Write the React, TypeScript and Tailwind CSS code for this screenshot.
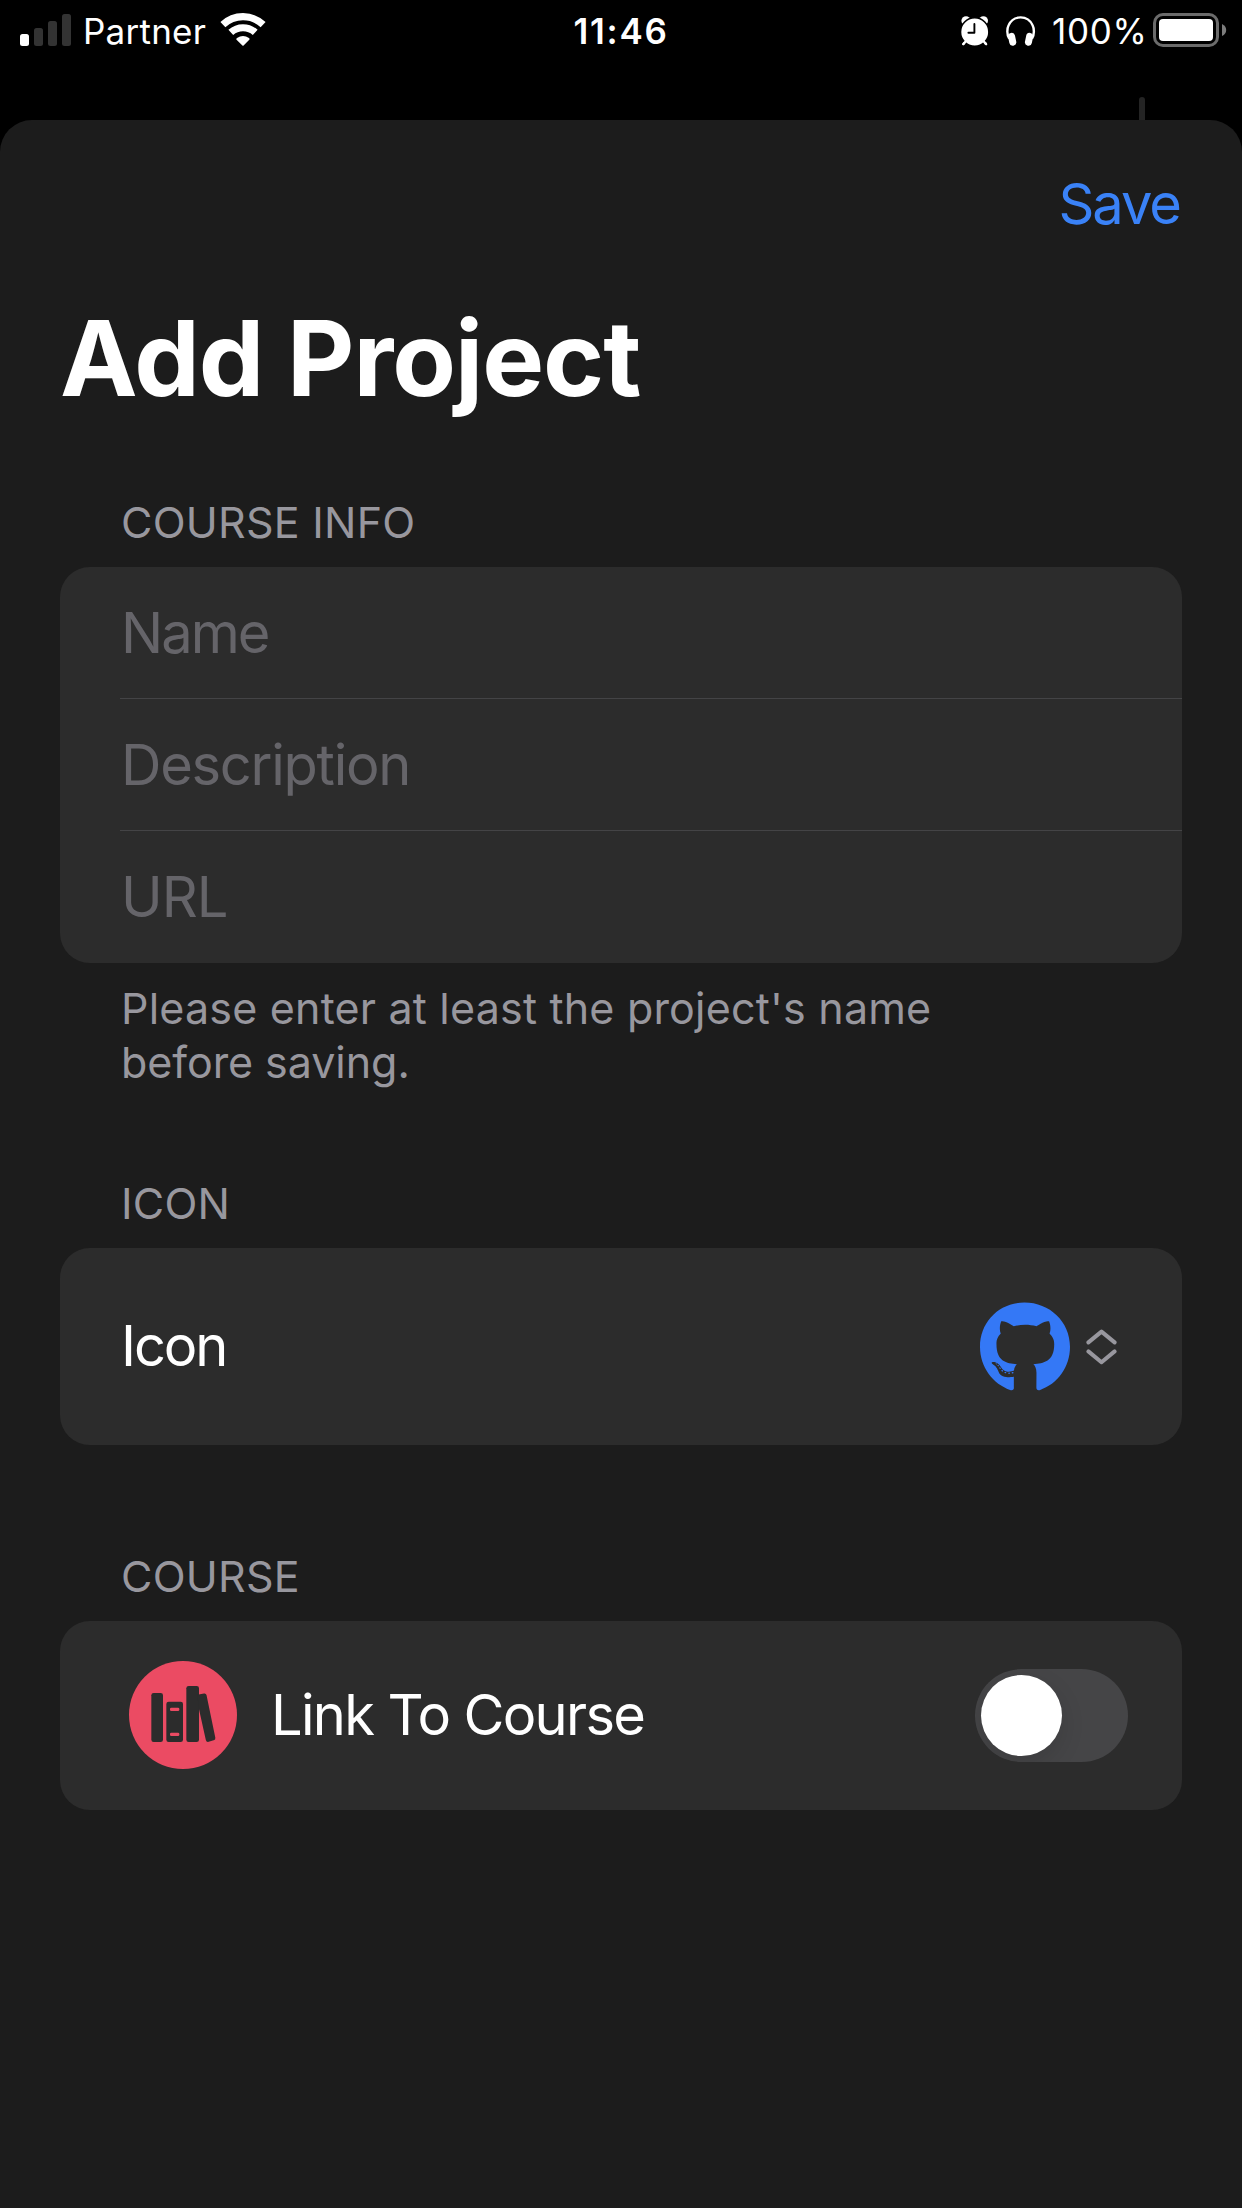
import type { ReactNode } from "react";
import { FaGithub } from "react-icons/fa";

function SignalBars() {
  return (
    <svg className="block h-8 w-[51px]" viewBox="0 0 51 32">
      <rect x="0" y="20" width="9" height="12" rx="2.5" fill="#fff" />
      <rect x="14" y="14" width="9" height="18" rx="2.5" fill="#333" />
      <rect x="28" y="7" width="9" height="25" rx="2.5" fill="#333" />
      <rect x="42" y="0" width="9" height="32" rx="2.5" fill="#333" />
    </svg>
  );
}

function WifiIcon() {
  return (
    <svg className="block h-[33px] w-[46px]" viewBox="-23 -33 46 33">
      <g fill="none" stroke="#fff">
        <path d="M-20.1 -21.3A29.3 29.3 0 0 1 20.1 -21.3" strokeWidth="7.2" />
        <path d="M-12.2 -13.6A18.3 18.3 0 0 1 12.2 -13.6" strokeWidth="7.2" />
      </g>
      <path d="M-6.7 -6.6Q-6.9 -7.4 -6 -8A10.5 10.5 0 0 1 6 -8Q6.9 -7.4 6.5 -6.6L0.6 -0.6Q0 0 -0.6 -0.6Z" fill="#fff" />
    </svg>
  );
}

function AlarmIcon() {
  return (
    <svg className="block h-[30px] w-7" viewBox="0 0 28 30">
      <g fill="#fff">
        <circle cx="5" cy="4.8" r="4.6" />
        <circle cx="22.4" cy="4.8" r="4.6" />
      </g>
      <path d="M5 25L2.4 28M22.4 25L25 28" stroke="#fff" strokeWidth="2.4" strokeLinecap="round" />
      <circle cx="13.7" cy="16" r="14.2" fill="#fff" stroke="#000" strokeWidth="1.6" />
      <path d="M5 25L2.4 28M22.4 25L25 28" stroke="#fff" strokeWidth="2.4" strokeLinecap="round" />
      <path d="M13.4 8V16.7H7.4" fill="none" stroke="#000" strokeWidth="1.9" strokeLinecap="round" strokeLinejoin="round" />
    </svg>
  );
}

function HeadphonesIcon() {
  return (
    <svg className="block h-[30px] w-[30px]" viewBox="0 0 30 30">
      <path d="M3.2 22.5C0.4 18.5 1.2 12 2.6 9.3C5 4 9.8 1.4 14.6 1.4S24.2 4 26.6 9.3C28 12 28.8 18.5 26 22.5" fill="none" stroke="#fff" strokeWidth="2.4" />
      <rect x="2.6" y="16.8" width="7" height="13" rx="3.5" fill="#fff" transform="rotate(-12 6 23)" />
      <rect x="19.6" y="16.8" width="7" height="13" rx="3.5" fill="#fff" transform="rotate(12 23.2 23)" />
    </svg>
  );
}

function BatteryIcon() {
  return (
    <svg className="block h-[34px] w-[74px]" viewBox="0 0 74 34">
      <rect x="1.5" y="1.5" width="63" height="31" rx="8.5" fill="none" stroke="#6b6b6b" strokeWidth="3" />
      <rect x="6" y="6" width="54" height="22" rx="4" fill="#fff" />
      <path d="M69 11Q73.2 13 73.2 17T69 23Z" fill="#7c7c7c" />
    </svg>
  );
}

function UpDownChevron() {
  return (
    <svg className="block h-9 w-[31px]" viewBox="0 0 31 36" fill="none" stroke="#98979e" strokeWidth="4" strokeLinecap="round" strokeLinejoin="round">
      <path d="M2.4 13.4L15.5 2.6L28.6 13.4" />
      <path d="M2.4 22.4L15.5 33.2L28.6 22.4" />
    </svg>
  );
}

function BooksIcon() {
  return (
    <svg className="block size-[108px]" viewBox="27 33 324 324">
      <circle cx="189" cy="195" r="162" fill="#eb4b63" />
      <g fill="#2c2c2c">
        <rect x="94" y="129" width="35" height="147" rx="7" />
        <rect x="139" y="155" width="50" height="121" rx="7" />
        <rect x="199" y="108" width="38" height="168" rx="7" />
        <path d="M232 134L252 130.5Q258 129.500 259.500 135L286 263Q287 269 281 271L266 275.500Q259 277 257.500 270L237 178Z" />
      </g>
      <g fill="#eb4b63">
        <rect x="150" y="173" width="28" height="10" rx="4" />
        <rect x="150" y="248" width="28" height="10" rx="4" />
      </g>
    </svg>
  );
}

function Section({ title, className, children }: { title: string; className: string; children: ReactNode }) {
  return (
    <section className={className}>
      <h2 className="mb-[18px] pl-[61px] text-[43px] leading-[54px] tracking-[0.25px] text-[#98979e]">{title}</h2>
      {children}
    </section>
  );
}

function Field({ label, className, last = false }: { label: string; className: string; last?: boolean }) {
  return (
    <div className={last ? "ml-[60px] flex h-[132px] items-center pl-px" : "ml-[60px] flex h-[132px] items-center border-b border-[#444446] pl-px"}>
      <span className={className}>{label}</span>
    </div>
  );
}

export default function App() {
  return (
    <div className="flex h-[2208px] w-[1242px] flex-col overflow-hidden bg-black font-['Inter',sans-serif] text-white">
      <header className="relative grid h-[120px] shrink-0 grid-cols-3 items-start text-[35px] leading-[62px]">
        <div className="flex items-start pl-5">
          <div className="pt-3.5"><SignalBars /></div>
          <span className="ml-3 w-[137px] tracking-[0.24px]">Partner</span>
          <div className="pt-[13px]"><WifiIcon /></div>
        </div>
        <div className="text-center font-semibold tracking-[1.73px]">11:46</div>
        <div className="flex items-start justify-end pr-[15px]">
          <div className="pt-[15.5px]"><AlarmIcon /></div>
          <div className="ml-[17px] pt-[15.5px]"><HeadphonesIcon /></div>
          <span className="ml-4 w-[101px] tracking-[0.67px]">100%</span>
          <div className="pt-[13px]"><BatteryIcon /></div>
        </div>
        <div className="absolute bottom-0 left-[1139px] h-[23px] w-1.5 rounded-t-full bg-[#242424]" />
      </header>

      <main className="flex flex-1 flex-col rounded-t-[32px] bg-[#1c1c1c] px-[60px]">
        <div className="flex justify-end pt-[49px] text-[56px] leading-[70px] tracking-[-2px] text-[#3a82f7]">
          <button className="mr-0.5">Save</button>
        </div>
        <h1 className="mt-14 text-[104px] leading-[126px] font-bold tracking-[-1px]">Add Project</h1>

        <Section title="COURSE INFO" className="mt-[74px]">
          <div className="rounded-[30px] bg-[#2c2c2c] text-[56px] leading-[70px] text-[#656469]">
            <Field label="Name" className="tracking-[-2px]" />
            <Field label="Description" className="tracking-[-1.26px]" />
            <Field label="URL" className="tracking-[-1px]" last />
          </div>
          <p className="mt-[18px] pl-[61px] text-[43px] leading-[54px] tracking-[0.2px] text-[#98979e]">
            Please enter at least the project's name
            <br />
            <span className="tracking-[-0.05px]">before saving.</span>
          </p>
        </Section>

        <Section title="ICON" className="mt-[87px]">
          <div className="flex h-[197px] items-center rounded-[30px] bg-[#2c2c2c] pr-[65px] pl-[61px]">
            <span className="flex-1 pb-0.5 text-[56px] leading-[70px] tracking-[-2.1px]">Icon</span>
            <FaGithub className="mt-px h-[93px] w-[90px] text-[#3478f6]" />
            <div className="ml-4"><UpDownChevron /></div>
          </div>
        </Section>

        <Section title="COURSE" className="mt-[104px]">
          <div className="flex h-[189px] items-center rounded-[30px] bg-[#2c2c2c] pr-[54px] pl-[69px]">
            <div className="pb-px"><BooksIcon /></div>
            <span className="ml-[34px] flex-1 pb-0.5 text-[56px] leading-[70px] tracking-[-1.68px]">Link To Course</span>
            <button role="switch" aria-checked="false" aria-label="Link To Course" className="flex h-[93px] w-[153px] items-center overflow-hidden rounded-full bg-[#454547] px-1.5">
              <span className="size-[81px] rounded-full bg-white shadow-[0_9px_24px_rgba(0,0,0,0.12)]" />
            </button>
          </div>
        </Section>
      </main>
    </div>
  );
}
